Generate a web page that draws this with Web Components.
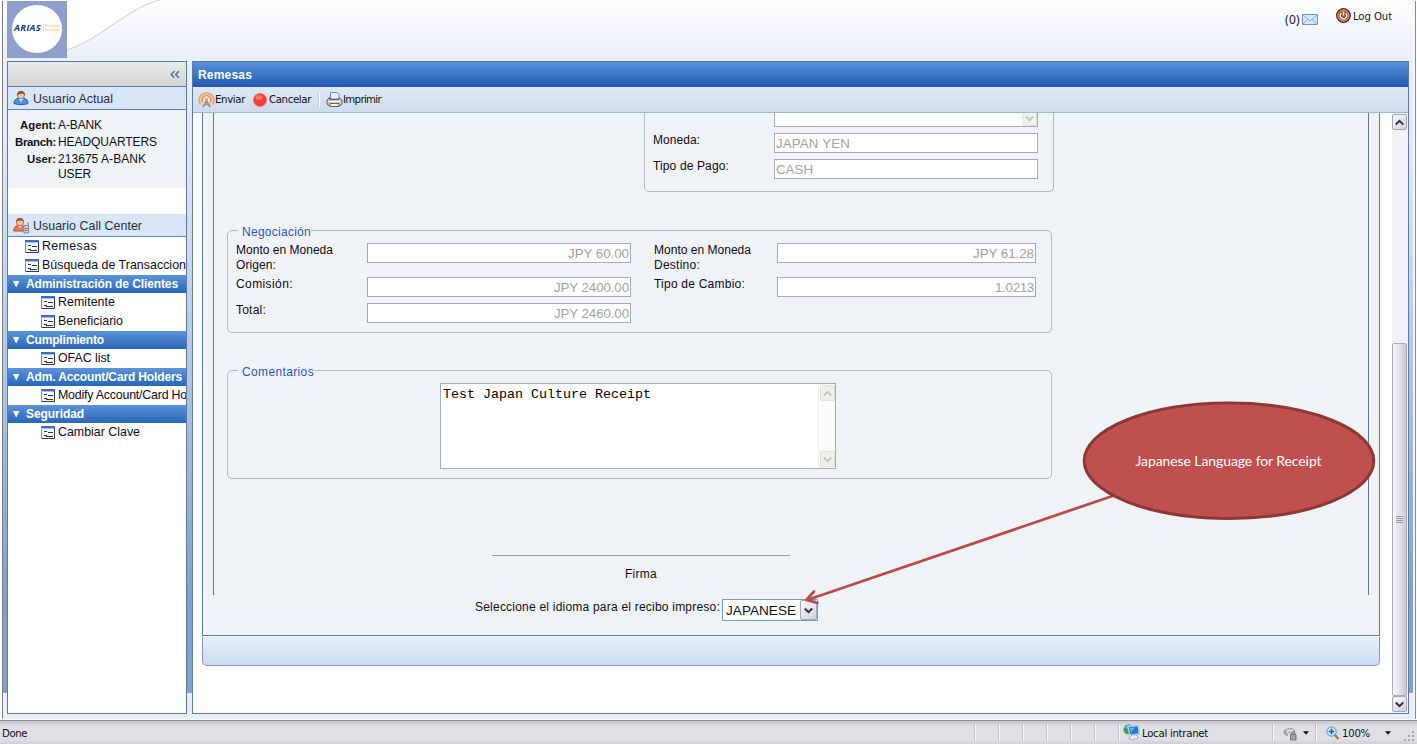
<!DOCTYPE html>
<html lang="es">
<head>
<meta charset="utf-8">
<title>Remesas</title>
<style>
html,body{margin:0;padding:0;background:#fff}
body{width:1417px;height:744px;overflow:hidden;font:12px "Liberation Sans",Arial,sans-serif;color:#101018}
</style>
</head>
<body>
<app-shell></app-shell>
<script>
const define=(name,html,after)=>{
  const t=document.createElement('template');t.innerHTML=html;
  customElements.define(name,class extends HTMLElement{
    constructor(){super();this.attachShadow({mode:'open'}).append(t.content.cloneNode(true));}
    connectedCallback(){if(after)after(this,this.shadowRoot);}
  });
};

/* Single line of text, tracked out or in to the width given in "w". */
define('fit-text',`<style>:host{display:inline-block;white-space:nowrap}</style><span><slot></slot></span>`,(el,root)=>{
  const w=+el.getAttribute('w'),s=root.querySelector('span');
  const n=el.textContent.length;
  if(w&&n){const nat=s.getBoundingClientRect().width;s.style.letterSpacing=((w-nat)/n).toFixed(3)+'px';}
});

define('form-icon',`<style>:host{display:block;width:14px;height:13px;flex:none}svg{display:block}</style>
<svg width="14" height="13" viewBox="0 0 14 13"><rect x=".5" y=".5" width="13" height="12" fill="#f6f8fc" stroke="#7f93b8"/><path d="M0 1h14" stroke="#3f68cc" stroke-width="2"/><path d="M0 2.500h14" stroke="#a8bfee"/><path d="M13.500 2v10.500H1" stroke="#2b3c60" fill="none"/><path d="M3 5.500h3M3 9.500h3" stroke="#333"/><path d="M7 6.500h5M5 10.500h7" stroke="#333"/></svg>`);

define('nav-item',`<style>:host{display:flex;height:19px;box-sizing:border-box;padding:0 0 2px 17px;align-items:center;font-size:12.4px;color:#100a18;white-space:nowrap;overflow:hidden}
:host([deep]){padding-left:33px}form-icon{margin:2px 3px 0 0}</style><form-icon></form-icon><slot></slot>`);

define('nav-group',`<style>:host{display:block}
div{height:18px;display:flex;align-items:center;color:#fff;font-weight:bold;font-size:12px;background:linear-gradient(#5b94d8,#2a66b8);padding-left:4px;white-space:nowrap;overflow:hidden}
svg{margin-right:6px;flex:none}</style>
<div><svg width="8" height="8" viewBox="0 0 8 8"><path d="M1 1h6.4L4.2 7.5z" fill="#fff"/></svg><slot name="title"></slot></div><slot></slot>`);

define('side-panel',`<style>
:host{display:flex;flex-direction:column;box-sizing:border-box;width:180px;background:#fff;border:1px solid #5c7ba4;overflow:hidden}
.top{height:24px;border-bottom:1px solid #5c7ba4;background:linear-gradient(#ebebeb,#d2d2d2);display:flex;justify-content:flex-end;align-items:center;padding-right:6px}
.head{height:22px;border-bottom:1px solid #5f84b8;background:#d9e6f7;display:flex;align-items:center;font-size:12.4px;color:#26303f}
.head svg{margin:0 4px 0 5px}.head fit-text{margin-top:1px}
.info{height:78px;box-sizing:border-box;background:#eff3f6;display:grid;grid-template-columns:48px 1fr;column-gap:2px;align-content:start;padding-top:8px;grid-auto-rows:17px;line-height:15px;margin-bottom:26px}
.info b{text-align:right;font-size:11.4px}.info span{white-space:nowrap}
</style>
<div class="top"><svg width="10" height="9" viewBox="0 0 10 9"><path d="M4.300 1.200L1.200 4.500l3.100 3.300M8.800 1.200L5.700 4.500l3.100 3.300" fill="none" stroke="#4a6d9c" stroke-width="1.400"/></svg></div>
<div class="head"><svg width="16" height="16" viewBox="0 0 16 16"><path d="M1 13.500c0-4 2.500-5.500 7-5.500s7 1.500 7 5.500c-4 1.500-10 1.500-14 0z" fill="#4a90e8" stroke="#2560a8"/><path d="M5.500 8l2.500 4 2.500-4z" fill="#d8ebff"/><circle cx="8" cy="5" r="3.600" fill="#f8c49a" stroke="#a5603a" stroke-width=".8"/><path d="M4 5c0-5 8-5.500 8 0-2-2-5-2-8 0z" fill="#8a4a2c"/></svg><fit-text w="80">Usuario Actual</fit-text></div>
<div class="info"><b><fit-text w="36">Agent:</fit-text></b><fit-text w="44">A-BANK</fit-text><b><fit-text w="41">Branch:</fit-text></b><fit-text w="99">HEADQUARTERS</fit-text><b><fit-text w="29">User:</fit-text></b><span><fit-text w="88">213675 A-BANK</fit-text><br><fit-text w="33">USER</fit-text></span></div>
<div class="head"><svg width="16" height="17" viewBox="0 0 16 17"><path d="M.7 14c0-4 2-5.500 6-5.500s6 2 6 5.500z" fill="#ee7058" stroke="#c04a38"/><path d="M5 9l2 2.500L9 9z" fill="#fbd0b0"/><circle cx="7" cy="5.200" r="3.700" fill="#f8c49a" stroke="#a5603a" stroke-width=".8"/><path d="M3 5c0-6 8-5.500 8 0-2-2-5-2-8 0z" fill="#9a5a34"/><path d="M11 8.500h4.500v7.500H11zM15 5v4" fill="#d4d8da" stroke="#80868a"/><path d="M12 11.500h2.500M12 13.500h2.500" stroke="#666"/></svg><fit-text w="109">Usuario Call Center</fit-text></div>
<nav-item><fit-text w="55">Remesas</fit-text></nav-item>
<nav-item><fit-text w="144">Búsqueda de Transaccion</fit-text></nav-item>
<nav-group><fit-text slot="title" w="152">Administración de Clientes</fit-text><nav-item deep><fit-text w="57">Remitente</fit-text></nav-item><nav-item deep><fit-text w="65">Beneficiario</fit-text></nav-item></nav-group>
<nav-group><fit-text slot="title" w="78">Cumplimiento</fit-text><nav-item deep><fit-text w="52">OFAC list</fit-text></nav-item></nav-group>
<nav-group><fit-text slot="title" w="156">Adm. Account/Card Holders</fit-text><nav-item deep><fit-text w="129">Modify Account/Card Ho</fit-text></nav-item></nav-group>
<nav-group><fit-text slot="title" w="58">Seguridad</fit-text><nav-item deep><fit-text w="82">Cambiar Clave</fit-text></nav-item></nav-group>`);

define('brand-logo',`<style>:host{display:block;width:60px;height:57px;background:#8f9fcb;box-sizing:border-box;padding:4px 5px}
.disc{width:50px;height:48px;border-radius:50%;background:#fff;display:flex;align-items:center;box-sizing:border-box;padding:0 0 3px 2px}
b{font:italic bold 9.500px "Open Sans",sans-serif;color:#1c3f78;width:28px}
.sub{border-left:1px solid #f6dcc4;padding-left:1px;font-size:3.500px;line-height:4px;color:#f0a868;margin-left:1px}</style>
<div class="disc"><b><fit-text w="27">ARIAS</fit-text></b><div class="sub"><fit-text w="15">Financial</fit-text><br><fit-text w="16">Solutions</fit-text></div></div>`);

define('app-header',`<style>
:host{display:flex;height:61px;box-sizing:border-box;padding:1px 23px 0 5px}
.curve{width:94px;height:60px;margin-top:-1px;flex:none}
.right{flex:1;display:flex;justify-content:flex-end;color:#222}
.mail{display:flex;height:16px;margin:10px 18px 0 0;align-items:center;font:12px "Noto Sans",sans-serif;gap:2px}
.out{display:flex;height:16px;margin-top:7px;align-items:center;gap:2px;font:11.300px "DejaVu Sans Condensed","DejaVu Sans",sans-serif}
.out svg{margin-top:-1px}
</style>
<brand-logo></brand-logo>
<svg class="curve" viewBox="0 0 94 60"><path d="M0 0h93C60 8 36 38 0 50z" fill="#fff"/><path d="M93 0C60 8 36 38 0 50" fill="none" stroke="#d6d6d8" stroke-width="1.200"/></svg>
<div class="right"><div class="mail"><fit-text w="15">(0)</fit-text><svg width="16" height="11" viewBox="0 0 16 11"><path d="M.5.5h15v10H.5z" fill="#d5e6fa" stroke="#6a96d0"/><path d="M1 1l7 6 7-6M1 10l5-5M15 10l-5-5" fill="none" stroke="#8db0de"/></svg></div>
<div class="out"><svg width="15" height="15" viewBox="0 0 15 15"><circle cx="7.500" cy="7.500" r="6.800" fill="#b05532" stroke="#5a2b1b" stroke-width="1.300"/><circle cx="7.500" cy="7.500" r="5.500" fill="none" stroke="#d8a088"/><path d="M5.200 5.200a3.300 3.300 0 1 0 4.600 0M7.500 3.500v4" fill="none" stroke="#fff" stroke-width="1.300"/></svg><fit-text w="39">Log Out</fit-text></div></div>`);

define('text-box',`<style>:host{display:flex;box-sizing:border-box;height:20px;border:1px solid #a5acb2;background:#fff;color:#a2a2a2;font-size:13.333px;line-height:19px;padding:0 2px 0 1px;overflow:hidden}
:host([end]){justify-content:flex-end;padding-right:1px}</style><slot></slot>`);

define('scroll-button',`<style>:host{display:flex;box-sizing:border-box;width:15px;height:16px;border:1px solid #a6a8b8;border-radius:2px;background:linear-gradient(135deg,#fcfcfe,#cfd0dc);align-items:center;justify-content:center;flex:none;color:#333}
:host([off]){background:#f1f0e8;border-color:#e4e3da;color:#c6c5bb}:host([down]) svg{transform:scaleY(-1)}</style>
<svg width="9" height="7" viewBox="0 0 9 7"><path d="M.8 5.500L4.500 1.800l3.700 3.700" fill="none" stroke="currentColor" stroke-width="2"/></svg>`);

define('field-group',`<style>:host{display:block;box-sizing:border-box;position:relative;border:1px solid #b6b9be;border-radius:5px}
.legend{position:absolute;left:10px;top:-6px;height:14px;line-height:14px;padding:0 0 0 4px;background:#eff3f6;color:#3053c0}
:host([plain]){border-top:0;border-radius:0 0 5px 5px}:host([plain]) .legend{display:none}</style>
<div class="legend"><slot name="legend"></slot></div><slot></slot>`);

define('tool-bar',`<style>:host{display:flex;height:25px;align-items:center;background:linear-gradient(#dce8f6,#cddcee);border-bottom:1px solid #9fb6cf;font:11.300px "DejaVu Sans Condensed","DejaVu Sans",sans-serif;color:#111;padding-left:5px}
svg{flex:none}i{width:1px;height:14px;background:#fff;border-left:1px solid #c0cede;margin:0 6px 0 7px}</style>
<svg width="17" height="17" viewBox="0 0 17 17"><path d="M2.500 13.500a7.300 7.300 0 1 1 12 0" fill="#f8d8c4" stroke="#ee9e72" stroke-width="1.800"/><path d="M5 11.500a4.300 4.300 0 1 1 7 0" fill="#fbe8da" stroke="#ee8e5c" stroke-width="1.600"/><circle cx="8.500" cy="8.500" r="1.500" fill="#e89068"/><path d="M8.500 10l-3.700 6M8.500 10l3.700 6M6.500 13.500h4" stroke="#82909c" stroke-width="1.600"/></svg><fit-text w="30">Enviar</fit-text>
<svg width="16" height="16" viewBox="0 0 16 16" style="margin:0 1px 0 7px"><circle cx="8" cy="8" r="7.600" fill="#f8b8b0"/><circle cx="8" cy="8" r="6.500" fill="#ee4030"/><ellipse cx="7" cy="5.500" rx="3.500" ry="2.500" fill="#f87868"/></svg><fit-text w="42">Cancelar</fit-text><i></i>
<svg width="17" height="17" viewBox="0 0 17 17"><path d="M4.500 8V1.500h6.500l2 2V8z" fill="#e8f2ff" stroke="#5a88d0"/><path d="M1 9l2.500-2.500V8.500H13V6.500l3 2.500v4l-2 1.500H3L1 13z" fill="#c6cacd" stroke="#5c6064"/><path d="M2.500 10.500h12" stroke="#fff"/><path d="M4 12.500h9v3H4z" fill="#f6f2dc" stroke="#666"/></svg><fit-text w="38">Imprimir</fit-text>`);

define('main-scroll',`<style>:host{display:flex;flex-direction:column;width:16px;box-sizing:border-box;background:#f1f1f7;padding:1px 1px 1px 0}
.gap{height:213px}.thumb{flex:1;border:1px solid #a9abbb;border-radius:2px;background:linear-gradient(90deg,#f6f6fa,#dcdce6 60%,#c8c8d6);display:flex;align-items:center;justify-content:center}</style>
<scroll-button></scroll-button><div class="gap"></div><div class="thumb"><svg width="7" height="8" viewBox="0 0 7 8"><path d="M0 .5h7M0 2.500h7M0 4.500h7M0 6.500h7" stroke="#9a9caa"/></svg></div><scroll-button down></scroll-button>`);

define('remesa-form',`<style>
:host{display:block;flex:1;background:#fff;padding-left:9px}
.panel{width:1176px;height:522px;background:#eff3f6;border:1px solid #5c7ba4;border-top:0;display:flex;flex-direction:column}
.inner{margin-left:10px;width:1154px;height:482px;border:1px solid #5c7ba4;border-top:0;border-bottom:0;flex:none}
.foot{width:1176px;height:28px;margin-top:1px;border:1px solid #7f9bc0;border-top:0;border-radius:0 0 5px 5px;background:linear-gradient(#e8eff8,#cadaf0)}
.a{margin-left:430px;width:410px;height:79px}
.ga{display:grid;grid-template-columns:121px 264px;padding-left:8px;row-gap:6px;grid-template-rows:14px 20px 20px}
.ga text-box:first-of-type{height:14px;border-top:0}
.b,.c{margin:38px 0 0 13px;width:825px}.b{height:103px}.c{height:109px;margin-top:37px}
.gb{display:grid;grid-template-columns:131px 264px 23px 123px 259px;grid-template-rows:34px 26px 20px;padding:12px 0 0 8px}
.l{line-height:15px;color:#100a18}
.area{margin:12px 0 0 212px;width:394px;height:84px;border:1px solid #a5acb2;background:#fff;display:flex;justify-content:space-between;font:13.333px/21px "Liberation Mono","Courier New",monospace;color:#000}
.area>span{padding-left:2px}
.bar{width:16px;border-left:1px solid #eeeee6;background:#fbfbfc;display:flex;flex-direction:column;justify-content:space-between;align-items:center;padding:1px 0}
.line{width:298px;height:1px;background:#92a0a4;margin:76px 0 11px 278px}
.firma{width:298px;margin-left:278px;text-align:center;line-height:15px}
.lang{display:flex;margin:4px 0 0 272px;gap:2px;align-items:flex-start;line-height:15px}
.lang>fit-text{margin-top:1px}
.sel{width:94px;height:20px;border:1px solid #7f9db9;background:#fff;display:flex;justify-content:space-between;align-items:center;font-size:13.600px;color:#111}
.sel>fit-text{padding:1px 0 0 3px}.sel scroll-button{width:17px;height:20px}
.half{align-items:flex-end;justify-content:flex-end;padding:0}
</style>
<div class="panel"><div class="inner">
<field-group class="a" plain><div class="ga"><span></span><text-box class="half"><scroll-button off down></scroll-button></text-box>
<div class="l"><fit-text w="47">Moneda:</fit-text></div><text-box><fit-text w="74">JAPAN YEN</fit-text></text-box>
<div class="l"><fit-text w="76">Tipo de Pago:</fit-text></div><text-box><fit-text w="37">CASH</fit-text></text-box></div></field-group>
<field-group class="b"><fit-text slot="legend" w="69">Negociación</fit-text><div class="gb">
<div class="l"><fit-text w="97">Monto en Moneda</fit-text><br><fit-text w="40">Origen:</fit-text></div><text-box end><fit-text w="61">JPY 60.00</fit-text></text-box><span></span>
<div class="l"><fit-text w="97">Monto en Moneda</fit-text><br><fit-text w="46">Destino:</fit-text></div><text-box end><fit-text w="61">JPY 61.28</fit-text></text-box>
<div class="l"><fit-text w="57">Comisión:</fit-text></div><text-box end><fit-text w="75">JPY 2400.00</fit-text></text-box><span></span>
<div class="l"><fit-text w="91">Tipo de Cambio:</fit-text></div><text-box end><fit-text w="39">1.0213</fit-text></text-box>
<div class="l"><fit-text w="30">Total:</fit-text></div><text-box end><fit-text w="75">JPY 2460.00</fit-text></text-box></div></field-group>
<field-group class="c"><fit-text slot="legend" w="72">Comentarios</fit-text><div class="area"><span>Test Japan Culture Receipt</span><div class="bar"><scroll-button off></scroll-button><scroll-button off down></scroll-button></div></div></field-group>
<div class="line"></div><div class="firma"><fit-text w="32">Firma</fit-text></div>
</div>
<div class="lang"><fit-text w="245">Seleccione el idioma para el recibo impreso:</fit-text><div class="sel"><fit-text w="70">JAPANESE</fit-text><scroll-button down></scroll-button></div></div>
</div><div class="foot"></div>`);

define('main-panel',`<style>
:host{display:flex;flex-direction:column;box-sizing:border-box;width:1217px;background:#fff;border:1px solid #5c7ba4;border-top-color:#4a78b8}
.title{height:25px;background:linear-gradient(#5a93d9,#1f59b0);color:#fff;font-weight:bold;line-height:26px;padding-left:5px}
.body{flex:1;display:flex;min-height:0}</style>
<div class="title"><fit-text w="54">Remesas</fit-text></div><tool-bar></tool-bar><div class="body"><remesa-form></remesa-form><main-scroll></main-scroll></div>`);

define('status-bar',`<style>
:host{display:flex;height:24px;box-sizing:border-box;border-top:1px solid #8b8b8b;background:linear-gradient(#c6c6cb,#dfdfe4 25%,#dfdfe4 80%,#cfcfd6);font:11.300px "DejaVu Sans Condensed","DejaVu Sans",sans-serif;color:#111;align-items:center}
.done{width:972px;padding-left:2px;flex:none}i{width:1px;height:17px;background:#f8f8fa;border-left:1px solid #c0c0c8;flex:none;margin-right:22px}
.zone{width:149px;display:flex;align-items:center;gap:2px;flex:none}.n{margin-right:3px}.m{margin-right:8px}
fit-text{margin-top:1px}
svg{display:block;flex:none}</style>
<div class="done"><fit-text w="25">Done</fit-text></div><i></i><i></i><i></i><i></i><i></i><i></i><i class="n"></i>
<div class="zone"><svg width="17" height="17" viewBox="0 0 17 17"><circle cx="5.500" cy="5.500" r="5" fill="#38a048"/><path d="M1 4q3-5 6-3L5 5zM2 8l3 2" fill="#58a8e8"/><path d="M5 2.500l10.500-1 .7 8.500-9.500 1z" fill="#2878d0" stroke="#b8cce4" stroke-width="1.400"/><path d="M7 4l5-.5-4 5z" fill="#68b8f4"/><path d="M9 11l4-.3 2.500 3.300-7 2-3-1.500z" fill="#e8eef4" stroke="#8c98a8" stroke-width=".7"/></svg><fit-text w="66">Local intranet</fit-text></div>
<i class="m"></i><svg width="16" height="16" viewBox="0 0 16 16"><path d="M2 8c2-5 8-6 11-2l-2 3C8 6 6 7 5 11z" fill="#d8d8da" stroke="#929296"/><path d="M1 7l2-3 3 6z" fill="#a0a0a4"/><path d="M8.500 9.500h5.500V15H8.500zM9.500 9V8q2-3 3.500 0v1" fill="#a4a4a8" stroke="#77777c"/></svg><svg width="6" height="4" viewBox="0 0 6 4" style="margin:0 6px 0 5px"><path d="M0 .3h6L3 3.700z" fill="#111"/></svg>
<i style="margin-right:9px"></i><svg width="14" height="14" viewBox="0 0 14 14"><path d="M8 8l4.500 5" stroke="#9a7858" stroke-width="2.400"/><circle cx="5.500" cy="5.500" r="4.700" fill="#cde6fc" stroke="#5890cc"/><path d="M5.500 2.800v5.400M2.800 5.500h5.400" stroke="#1560b8" stroke-width="1.600"/></svg><fit-text w="28" style="margin:1px 15px 0 2px">100%</fit-text><svg width="6" height="4" viewBox="0 0 6 4"><path d="M0 .3h6L3 3.700z" fill="#111"/></svg>
<svg width="12" height="12" viewBox="0 0 12 12" style="margin:9px 0 0 12px"><path d="M9 0h2v2h-2zM5 4h2v2H5zM9 4h2v2H9zM1 8h2v2H1zM5 8h2v2H5zM9 8h2v2H9z" fill="#a9a9b2"/></svg>`);

/* Annotation bubble floating over the form, with its arrow. */
define('callout-note',`<style>:host{position:absolute;left:796px;top:395px;width:590px;height:220px;display:block}
svg{display:block}.t{position:absolute;left:287px;top:7px;width:291px;height:117px;display:flex;align-items:center;justify-content:center;color:#fff;font:13.900px Lato,sans-serif}</style>
<svg width="590" height="220" viewBox="796 395 590 220"><path d="M1114 495.500L807 600" stroke="#b94b4a" stroke-width="2.800" fill="none"/><path d="M814 591.500L806.500 600l11 3" fill="none" stroke="#b94b4a" stroke-width="2.800" stroke-linejoin="round" stroke-linecap="round"/><ellipse cx="1229" cy="460.800" rx="144.800" ry="57.700" fill="#c0504d" stroke="#8c3836" stroke-width="3"/></svg>
<div class="t"><fit-text w="186">Japanese Language for Receipt</fit-text></div>`);

define('app-shell',`<style>
:host{display:flex;flex-direction:column;position:relative;width:1417px;height:744px;overflow:hidden}
.page{margin:1px 1px 0 2px;height:718px;box-sizing:border-box;border-left:1px solid #7d7f84;border-right:1px solid #8a8c92;background:linear-gradient(#f4f6fc,#eef2fb) right/2px 100% no-repeat,linear-gradient(#fcfdfe,#e9eff8 61px,#dde7f4 160px,#7fa0cd 600px,#82a2ce 692px,#e9eff9 692px)}
app-header{margin:-1px 0 0 -1px}
.cols{display:flex;gap:5px;height:653px;padding-left:4px}
status-bar{margin-top:1px}
</style>
<div class="page"><app-header></app-header><div class="cols"><side-panel></side-panel><main-panel></main-panel></div></div>
<status-bar></status-bar><callout-note></callout-note>`);
</script>
</body>
</html>
